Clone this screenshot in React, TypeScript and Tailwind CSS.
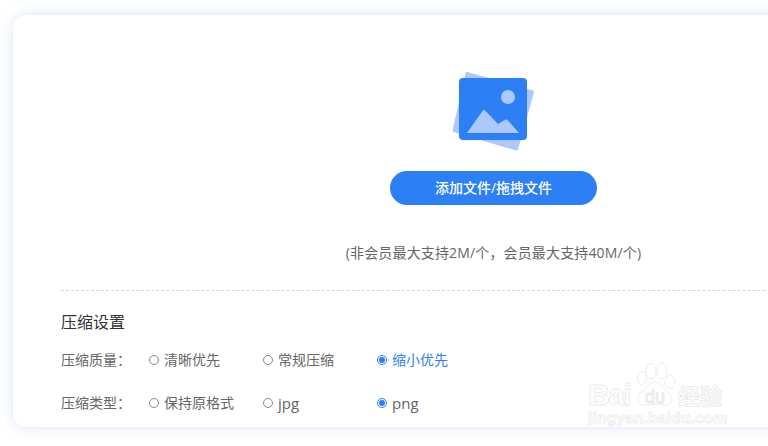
const font = "font-['Open_Sans','Noto_Sans_CJK_SC',sans-serif]";

function Radio({ label, checked, blue, latin }: { label: string; checked?: boolean; blue?: boolean; latin?: boolean }) {
  return (
    <div className="w-[114px] flex items-center">
      {checked ? (
        <span className="w-[10px] h-[10px] rounded-full border border-[#2d7ff6] flex items-center justify-center">
          <span className="w-[6px] h-[6px] rounded-full bg-[#2d7ff6]" />
        </span>
      ) : (
        <span className="w-[10px] h-[10px] rounded-full border border-[#888]" />
      )}
      <span className={`ml-[5px] leading-5 ${latin ? "text-[15px]" : "text-[14px]"} ${blue ? "text-[#2d7ff6]" : "text-[#666]"}`}>{label}</span>
    </div>
  );
}

function Row({ title, options, className }: { title: string; options: { label: string; checked?: boolean; blue?: boolean; latin?: boolean }[]; className: string }) {
  return (
    <div className={`flex items-center h-5 ${className}`}>
      <div className="w-[88px] text-[14px] leading-5 text-[#666]">{title}</div>
      {options.map((o) => (
        <Radio key={o.label} {...o} />
      ))}
    </div>
  );
}

function PictureIcon() {
  return (
    <svg width="82" height="82" viewBox="0 0 82 82">
      <path d="M15 3.500 L80.500 22 L64.500 79 L2 60.500 Z" fill="#adc9fb" stroke="#adc9fb" strokeWidth="3" strokeLinejoin="round" />
      <rect x="7" y="8" width="68" height="62" rx="4" fill="#2d7ff6" />
      <circle cx="56" cy="27" r="7" fill="#adc9fb" />
      <path d="M15 63 L30.500 41 Q32 39 33.500 41 L46 54 L53.500 49.500 Q55 49 56 50.500 L67 63 Z" fill="#adc9fb" />
    </svg>
  );
}

function Watermark() {
  return (
    <div className="absolute left-[588px] top-[362px] w-[180px] h-[76px] pointer-events-none font-['Liberation_Sans',sans-serif]">
      <svg className="absolute left-[46px] top-0" width="44" height="46" viewBox="0 0 44 46" fill="#fff" stroke="#ececec" strokeWidth="1">
        <ellipse cx="8" cy="16" rx="4.500" ry="6.500" />
        <ellipse cx="17" cy="9" rx="5" ry="8" />
        <ellipse cx="28" cy="9" rx="5" ry="8" />
        <ellipse cx="36" cy="20" rx="5" ry="6.500" />
        <path d="M21 20 C28 20 29 27 34 30 C41 35 38 44 31 43 C25 42 17 42 11 43 C4 44 1 35 8 30 C13 27 14 20 21 20 Z" />
      </svg>
      <span className="absolute left-0 top-[15px] text-[30px] leading-[36px] font-bold tracking-[-1.500px] text-transparent [-webkit-text-stroke:1px_#ececec]">Bai</span>
      <span className="absolute left-[57px] top-[25px] text-[18px] leading-[20px] text-transparent [-webkit-text-stroke:1px_#e8e8e8]">du</span>
      <span className="absolute left-[90px] top-[17px] text-[22px] leading-[30px] font-bold text-transparent font-['Noto_Sans_CJK_SC',sans-serif] [-webkit-text-stroke:1px_#ececec]">经验</span>
      <span className="absolute left-0 top-[46px] text-[15.500px] leading-[20px] font-bold tracking-[0.2px] text-transparent [-webkit-text-stroke:1px_#efefef]">jingyan.baidu.com</span>
    </div>
  );
}

export default function App() {
  return (
    <div className={`relative w-[768px] h-[446px] overflow-hidden bg-white ${font}`}>
      <div className="ml-[13px] mt-[15px] w-[961px] h-[412px] rounded-[14px] bg-white shadow-[0_0_14px_rgba(190,208,235,0.55)] px-[48px] flex flex-col">
        <div className="flex flex-col items-center">
          <div className="mt-[55px] h-[75px] mr-[1px]">
            <PictureIcon />
          </div>
          <button className="mt-[26px] w-[207px] h-[34px] rounded-full bg-[#2d7ff6] text-white text-[14px] leading-[34px] font-medium">添加文件/拖拽文件</button>
          <p className="mt-[38px] text-[14px] leading-5 tracking-[0.15px] text-[#666]">(非会员最大支持2M/个，会员最大支持40M/个)</p>
        </div>
        <div className="mt-[27px] border-t border-dashed border-[#d5d5d5]" />
        <h2 className="mt-[21px] text-[16px] leading-5 text-[#333]">压缩设置</h2>
        <Row
          className="mt-[18px]"
          title="压缩质量："
          options={[{ label: "清晰优先" }, { label: "常规压缩" }, { label: "缩小优先", checked: true, blue: true }]}
        />
        <Row
          className="mt-[23px]"
          title="压缩类型："
          options={[{ label: "保持原格式" }, { label: "jpg", latin: true }, { label: "png", checked: true, latin: true }]}
        />
      </div>
      <Watermark />
    </div>
  );
}
